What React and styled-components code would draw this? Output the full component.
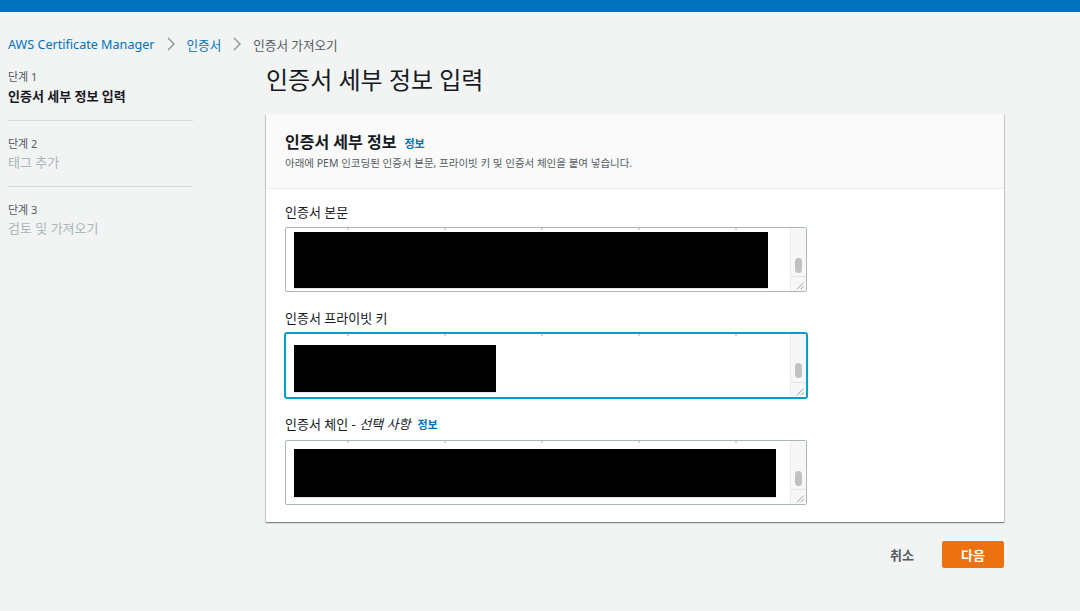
import React from "react";
import styled, { createGlobalStyle } from "styled-components";

const Global = createGlobalStyle`
  html, body { margin: 0; padding: 0; background: #f2f3f3; }
  body { font-family: "Noto Sans", "Noto Sans CJK KR", sans-serif; color: #16191f; }
  * { box-sizing: border-box; }
`;

const TopBar = styled.div`
  height: 12px;
  background: #0073bb;
`;

const Page = styled.div`
  padding: 0 76px 0 8px;
`;

const Crumbs = styled.nav`
  display: flex;
  align-items: center;
  height: 20px;
  margin-top: 22px;
  font-size: 12.6px;
`;

const CrumbLink = styled.span`
  color: #0073bb;
`;

const CrumbCurrent = styled.span`
  color: #545b64;
`;

const Chevron = styled.svg`
  width: 12px;
  height: 14px;
  margin: 0 10px;
  fill: none;
  stroke: #879596;
  stroke-width: 1.4;
`;

const Layout = styled.div`
  display: flex;
  margin-top: 10px;
`;

const Steps = styled.ol`
  list-style: none;
  margin: 5px 0 0;
  padding: 0;
  width: 185px;
  flex: none;
`;

const Step = styled.li`
  padding: ${(p) => (p.$first ? "0" : "15px")} 0 15px;
  border-bottom: ${(p) => (p.$last ? "none" : "1px solid #d5dbdb")};
`;

const StepNum = styled.div`
  font-size: 11px;
  line-height: 16px;
  color: #545b64;
`;

const StepTitle = styled.div`
  font-size: 13px;
  line-height: 18px;
  margin-top: ${(p) => (p.$active ? 2 : 1)}px;
  font-weight: ${(p) => (p.$active ? 700 : 400)};
  color: ${(p) => (p.$active ? "#16191f" : "#aab7b8")};
`;

const Main = styled.main`
  margin-left: 73px;
  flex: 1;
`;

const PageTitle = styled.h1`
  margin: 0;
  font-size: 24px;
  line-height: 32px;
  font-weight: 400;
  color: #16191f;
`;

const Card = styled.section`
  margin-top: 18px;
  background: #fff;
  box-shadow: 0 1px 1px 0 rgba(0, 28, 36, 0.3), 1px 1px 1px 0 rgba(0, 28, 36, 0.15),
    -1px 1px 1px 0 rgba(0, 28, 36, 0.15);
`;

const CardHeader = styled.header`
  background: #fafafa;
  border-bottom: 1px solid #eaeded;
  padding: 18px 19px 17px;
`;

const CardTitleRow = styled.div`
  display: flex;
  align-items: baseline;
  gap: 8px;
`;

const CardTitle = styled.h2`
  margin: 0;
  font-size: 16px;
  line-height: 20px;
  font-weight: 700;
`;

const InfoLink = styled.span`
  font-size: 11px;
  font-weight: 700;
  color: #0073bb;
`;

const CardDesc = styled.p`
  margin: 3px 0 0;
  font-size: 10.5px;
  line-height: 16px;
  color: #545b64;
`;

const CardBody = styled.div`
  padding: 13px 19px 17px;
  display: flex;
  flex-direction: column;
  gap: 16px;
`;

const Field = styled.div`
  display: flex;
  flex-direction: column;
`;

const Label = styled.label`
  display: flex;
  align-items: baseline;
  gap: 7px;
  font-size: 13px;
  line-height: 20px;
  color: #16191f;
  margin-bottom: 5px;
`;

const Optional = styled.i`
  font-style: italic;
`;

const Box = styled.div`
  width: 522px;
  height: 65px;
  display: flex;
  background: #fff;
  border: 1px solid ${(p) => (p.$focused ? "#00a1c9" : "#aab7b8")};
  box-shadow: ${(p) => (p.$focused ? "0 0 0 1px #00a1c9" : "none")};
  border-radius: 2px;
  overflow: hidden;
`;

const Content = styled.div`
  flex: 1;
  position: relative;
  padding: ${(p) => p.$pad};
`;

const Ticks = styled.div`
  position: absolute;
  left: 20px;
  right: 30px;
  top: 0;
  height: 2px;
  background-image: repeating-linear-gradient(
    90deg,
    transparent 0 41px,
    #888 41px 43px,
    transparent 43px 97px
  );
  opacity: 0.35;
`;

const Redaction = styled.div`
  width: ${(p) => p.$w}px;
  height: ${(p) => p.$h}px;
  background: #000;
  border-bottom: 1px solid #e4e4e4;
`;

const Scrollbar = styled.div`
  width: 16px;
  flex: none;
  display: flex;
  flex-direction: column;
  background: #f7f7f7;
  border-left: 1px solid #ececec;
`;

const Track = styled.div`
  flex: 1;
  display: flex;
  justify-content: center;
  padding-top: ${(p) => p.$thumbTop}px;
`;

const Thumb = styled.div`
  width: 7px;
  height: 15px;
  border-radius: 4px;
  background: #c1c1c1;
`;

const Corner = styled.svg`
  width: 15px;
  height: 15px;
  flex: none;
  border-top: 1px solid #e6e6e6;
  stroke: #999;
  stroke-width: 1;
`;

const Actions = styled.div`
  display: flex;
  justify-content: flex-end;
  align-items: center;
  gap: 28px;
  margin-top: 19px;
`;

const Cancel = styled.button`
  border: none;
  background: none;
  font-family: inherit;
  font-size: 13px;
  font-weight: 700;
  color: #545b64;
  padding: 0;
`;

const Primary = styled.button`
  width: 62px;
  height: 27px;
  border: 1px solid #ec7211;
  border-radius: 2px;
  background: #ec7211;
  color: #fff;
  font-family: inherit;
  font-size: 13px;
  font-weight: 700;
`;

function FakeTextarea({ w, h, pad, focused, thumbTop }) {
  return (
    <Box $focused={focused}>
      <Content $pad={pad}>
        <Ticks />
        <Redaction $w={w} $h={h} />
      </Content>
      <Scrollbar>
        <Track $thumbTop={thumbTop}>
          <Thumb />
        </Track>
        <Corner viewBox="0 0 15 15">
          <line x1="13" y1="6" x2="6" y2="13" />
          <line x1="13" y1="10" x2="10" y2="13" />
        </Corner>
      </Scrollbar>
    </Box>
  );
}

const ChevronIcon = () => (
  <Chevron viewBox="0 0 12 14">
    <polyline points="3,1 9,7 3,13" />
  </Chevron>
);

export default function App() {
  return (
    <>
      <Global />
      <TopBar />
      <Page>
        <Crumbs>
          <CrumbLink>AWS Certificate Manager</CrumbLink>
          <ChevronIcon />
          <CrumbLink>인증서</CrumbLink>
          <ChevronIcon />
          <CrumbCurrent>인증서 가져오기</CrumbCurrent>
        </Crumbs>
        <Layout>
          <Steps>
            <Step $first>
              <StepNum>단계 1</StepNum>
              <StepTitle $active>인증서 세부 정보 입력</StepTitle>
            </Step>
            <Step>
              <StepNum>단계 2</StepNum>
              <StepTitle>태그 추가</StepTitle>
            </Step>
            <Step $last>
              <StepNum>단계 3</StepNum>
              <StepTitle>검토 및 가져오기</StepTitle>
            </Step>
          </Steps>
          <Main>
            <PageTitle>인증서 세부 정보 입력</PageTitle>
            <Card>
              <CardHeader>
                <CardTitleRow>
                  <CardTitle>인증서 세부 정보</CardTitle>
                  <InfoLink>정보</InfoLink>
                </CardTitleRow>
                <CardDesc>
                  아래에 PEM 인코딩된 인증서 본문, 프라이빗 키 및 인증서 체인을 붙여 넣습니다.
                </CardDesc>
              </CardHeader>
              <CardBody>
                <Field>
                  <Label>인증서 본문</Label>
                  <FakeTextarea w={474} h={57} pad="4px 8px 0" thumbTop={30} />
                </Field>
                <Field>
                  <Label>인증서 프라이빗 키</Label>
                  <FakeTextarea w={202} h={48} pad="11px 8px 0" thumbTop={29} focused />
                </Field>
                <Field>
                  <Label>
                    <span>
                      인증서 체인 - <Optional>선택 사항</Optional>
                    </span>
                    <InfoLink>정보</InfoLink>
                  </Label>
                  <FakeTextarea w={482} h={49} pad="8px 8px 0" thumbTop={30} />
                </Field>
              </CardBody>
            </Card>
            <Actions>
              <Cancel>취소</Cancel>
              <Primary>다음</Primary>
            </Actions>
          </Main>
        </Layout>
      </Page>
    </>
  );
}
